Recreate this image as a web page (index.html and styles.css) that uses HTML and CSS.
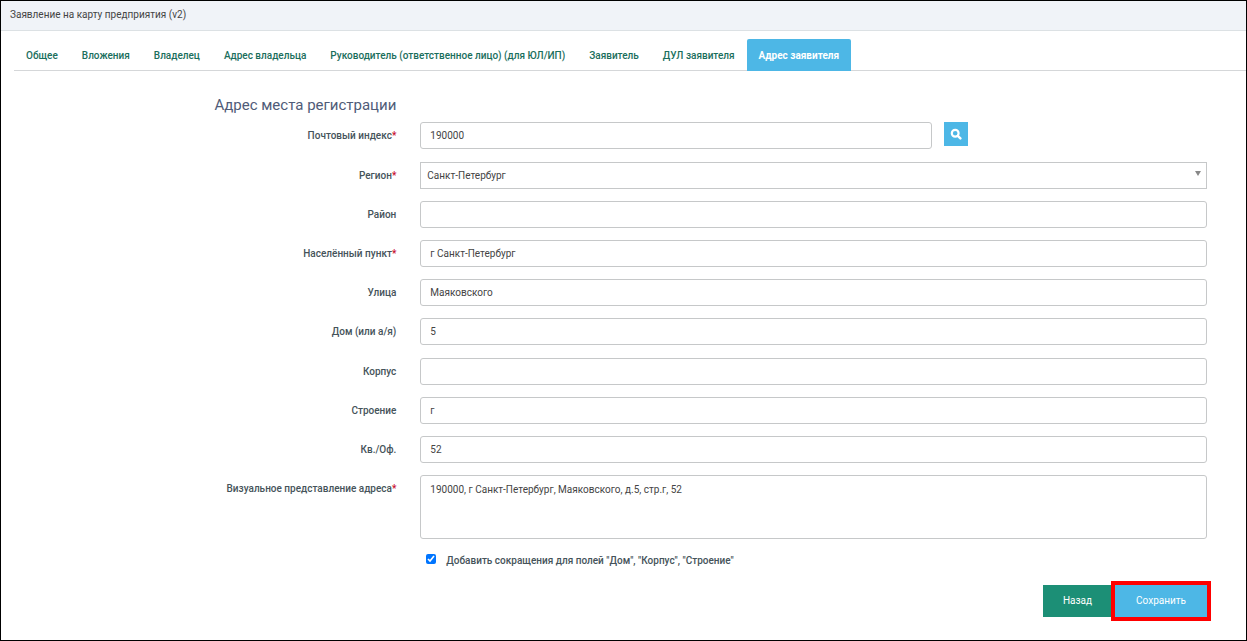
FILE: index.html
```html
<!DOCTYPE html>
<html lang="ru">
<head>
<meta charset="utf-8">
<title>Заявление на карту предприятия (v2)</title>
<link rel="stylesheet" href="styles.css">
</head>
<body>
<div class="page">
  <header class="page-header">Заявление на карту предприятия (v2)</header>
  <nav class="tabs">
    <a class="tab" href="#">Общее</a>
    <a class="tab" href="#">Вложения</a>
    <a class="tab" href="#">Владелец</a>
    <a class="tab" href="#">Адрес владельца</a>
    <a class="tab" href="#">Руководитель (ответственное лицо) (для ЮЛ/ИП)</a>
    <a class="tab" href="#">Заявитель</a>
    <a class="tab" href="#">ДУЛ заявителя</a>
    <a class="tab active" href="#" aria-current="page">Адрес заявителя</a>
  </nav>
  <form class="form">
    <div class="row title-row"><h1 class="title">Адрес места регистрации</h1></div>
    <div class="row row-index">
      <label class="label" for="index">Почтовый индекс<span class="req">*</span></label>
      <div class="index-group">
        <input class="control" id="index" type="text" value="190000">
        <button class="search" type="button" aria-label="Найти">
          <svg class="icon" viewBox="0 0 12 12"><circle cx="5.2" cy="5.2" r="3.4" fill="none" stroke="currentColor" stroke-width="2.2"/><path d="M7.8 7.8 10.4 10.4" stroke="currentColor" stroke-width="2.4" stroke-linecap="round"/></svg>
        </button>
      </div>
    </div>
    <div class="row">
      <label class="label" for="region">Регион<span class="req">*</span></label>
      <div class="select-wrap">
        <select class="control select" id="region"><option>Санкт-Петербург</option></select>
        <svg class="arrow" viewBox="0 0 6 5"><path d="M0 0H6L3 5Z" fill="#888"/></svg>
      </div>
    </div>
    <div class="row">
      <label class="label" for="district">Район</label>
      <input class="control" id="district" type="text">
    </div>
    <div class="row">
      <label class="label" for="city">Населённый пункт<span class="req">*</span></label>
      <input class="control" id="city" type="text" value="г Санкт-Петербург">
    </div>
    <div class="row">
      <label class="label" for="street">Улица</label>
      <input class="control" id="street" type="text" value="Маяковского">
    </div>
    <div class="row row-house">
      <label class="label" for="house">Дом (или а/я)</label>
      <input class="control" id="house" type="text" value="5">
    </div>
    <div class="row">
      <label class="label" for="block">Корпус</label>
      <input class="control" id="block" type="text">
    </div>
    <div class="row">
      <label class="label" for="building">Строение</label>
      <input class="control" id="building" type="text" value="г">
    </div>
    <div class="row">
      <label class="label" for="flat">Кв./Оф.</label>
      <input class="control" id="flat" type="text" value="52">
    </div>
    <div class="row">
      <label class="label" for="full">Визуальное представление адреса<span class="req">*</span></label>
      <textarea class="control area" id="full">190000, г Санкт-Петербург, Маяковского, д.5, стр.г, 52</textarea>
    </div>
    <div class="row">
      <div class="check">
        <input class="checkbox" id="abbr" type="checkbox" checked>
        <label class="check-label" for="abbr">Добавить сокращения для полей "Дом", "Корпус", "Строение"</label>
      </div>
    </div>
    <div class="actions">
      <button class="btn back" type="button">Назад</button>
      <button class="btn save" type="submit">Сохранить</button>
    </div>
  </form>
</div>
</body>
</html>
```
FILE: styles.css
```css
* { box-sizing: border-box; }
body {
  margin: 0;
  font-family: Roboto, "Liberation Sans", sans-serif;
  font-size: 10px;
  line-height: 16px;
  color: #444;
}
input, select, textarea, button { font: inherit; color: inherit; }
.page {
  min-height: 100vh;
  border: 1px solid #000;
  background: #fff;
}
.page-header {
  padding: 6px 9px 7px;
  background: #f0f3f8;
  border-bottom: 1px solid #dce1e4;
}
.tabs {
  display: flex;
  margin: 8px 0 0 13px;
  border-bottom: 1px solid #d5d7d9;
}
.tab {
  padding: 9px 12px 6px;
  color: #1a6e5c;
  font-weight: 500;
  text-decoration: none;
  white-space: nowrap;
}
.tab.active {
  margin-bottom: -1px;
  padding-bottom: 7px;
  background: #4db7e6;
  color: #fff;
  font-weight: 700;
  border-radius: 2px 2px 0 0;
}
.form {
  display: grid;
  gap: 12px;
  padding: 24px 39px 19px 2px;
}
.row {
  display: grid;
  grid-template-columns: 1fr 2fr;
  column-gap: 24px;
  align-items: start;
}
.title-row { margin-bottom: -5px; }
.title {
  margin: 0;
  font-size: 15px;
  line-height: 20px;
  font-weight: 400;
  color: #4f5b78;
  text-align: right;
}
.row-index, .row-house { min-height: 28px; }
.label {
  padding-top: 6px;
  text-align: right;
  font-weight: 500;
  color: #45535a;
}
.req { color: #c8102e; }
.control {
  width: 100%;
  height: 27px;
  margin: 0;
  padding: 0 9px;
  border: 1px solid #c6c8c9;
  border-radius: 3px;
  background: #fff;
}
.index-group {
  display: grid;
  grid-template-columns: 65% 24px;
  column-gap: 12px;
}
.search {
  display: grid;
  place-items: center;
  width: 24px;
  height: 24px;
  padding: 0;
  border: 0;
  background: #4db7e6;
  color: #fff;
}
.icon { width: 12px; height: 12px; }
.select-wrap { position: relative; }
.select {
  display: block;
  appearance: none;
  padding: 0 6px;
  border-radius: 0;
}
.arrow {
  position: absolute;
  top: 9px;
  right: 6px;
  width: 6px;
  height: 5px;
  pointer-events: none;
}
.area {
  display: block;
  height: 64px;
  padding: 6px 9px;
  resize: none;
}
.check {
  grid-column: 2;
  display: flex;
  align-items: start;
  gap: 10px;
  padding: 2px 0 0 6px;
}
.checkbox {
  width: 10px;
  height: 10px;
  margin: 1px 0 0;
  accent-color: #0075ff;
}
.check-label {
  font-weight: 500;
  color: #45535a;
}
.actions {
  display: flex;
  justify-content: flex-end;
  gap: 3px;
  padding-top: 4px;
}
.btn {
  height: 32px;
  padding: 0 20px;
  border: 0;
  color: #fff;
}
.back { background: #1c8f76; }
.save {
  padding: 0 21px;
  background: #4db7e6;
  outline: 4px solid #f00;
}
```
